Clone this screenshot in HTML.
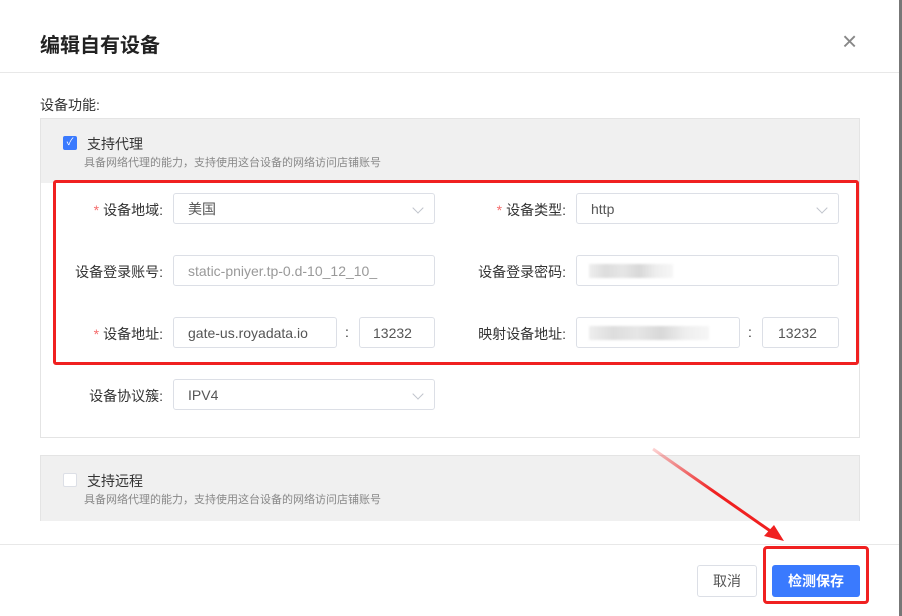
<!DOCTYPE html>
<html><head><meta charset="utf-8"><style>
*{box-sizing:border-box;margin:0;padding:0}
body{width:902px;height:616px;background:#fff;font-family:"Liberation Sans","Noto Sans CJK SC",sans-serif;position:relative;overflow:hidden;color:#333}
.a{position:absolute}
.title{left:40px;top:29px;font-size:20px;font-weight:bold;color:#222}
.lbl{font-size:14px;color:#333;text-align:right;width:140px}
.in{position:absolute;height:31px;border:1px solid #dcdfe6;border-radius:3px;background:#fff;font-size:14px;color:#555;padding-left:14px;line-height:30px}
.chev{position:absolute;right:12px;top:10px;width:8px;height:8px;border-right:1px solid #c0c4cc;border-bottom:1px solid #c0c4cc;transform:rotate(45deg)}
.blur{position:absolute;top:8px;height:14px;background:linear-gradient(90deg,#eee,#ddd,#e6e6e6,#d8d8d8,#eee,#f6f6f6);filter:blur(1px)}
.req{color:#f56c6c;margin-right:4px}
</style></head><body>
<div class="a title">编辑自有设备</div>
<div class="a" style="left:842px;top:28px;font-size:26px;color:#888;line-height:26px">×</div>
<div class="a" style="left:0;top:72px;width:899px;height:1px;background:#e8e8e8"></div>
<div class="a" style="left:899px;top:0;width:3px;height:616px;background:#777"></div>
<div class="a" style="left:40px;top:95px;font-size:14px">设备功能:</div>

<div class="a" style="left:40px;top:118px;width:820px;height:320px;border:1px solid #e4e4e4;background:#fff"></div>
<div class="a" style="left:41px;top:119px;width:818px;height:64px;background:#f0f0f0"></div>
<div class="a" style="left:63px;top:136px;width:14px;height:14px;background:#3a7afe;border-radius:2px;color:#fff;font-size:10px;line-height:14px;text-align:center">✓</div>
<div class="a" style="left:87px;top:134px;font-size:14px;color:#333">支持代理</div>
<div class="a" style="left:84px;top:154px;font-size:11px;color:#888">具备网络代理的能力，支持使用这台设备的网络访问店铺账号</div>

<div class="a" style="left:53px;top:180px;width:806px;height:185px;border:3px solid #f02020;border-radius:3px"></div>

<div class="a lbl" style="left:23px;top:200px"><span class="req">*</span>设备地域:</div>
<div class="in" style="left:173px;top:193px;width:262px">美国<span class="chev"></span></div>
<div class="a lbl" style="left:426px;top:200px"><span class="req">*</span>设备类型:</div>
<div class="in" style="left:576px;top:193px;width:263px">http<span class="chev"></span></div>

<div class="a lbl" style="left:23px;top:262px">设备登录账号:</div>
<div class="in" style="left:173px;top:255px;width:262px;color:#999">static-pniyer.tp-0.d-10_12_10_</div>
<div class="a lbl" style="left:426px;top:262px">设备登录密码:</div>
<div class="in" style="left:576px;top:255px;width:263px"><span class="blur" style="left:12px;width:84px"></span></div>

<div class="a lbl" style="left:23px;top:324px"><span class="req">*</span>设备地址:</div>
<div class="in" style="left:173px;top:317px;width:164px">gate-us.royadata.io</div>
<div class="a" style="left:345px;top:324px;font-size:14px">:</div>
<div class="in" style="left:359px;top:317px;width:76px;padding-left:13px">13232</div>
<div class="a lbl" style="left:426px;top:324px">映射设备地址:</div>
<div class="in" style="left:576px;top:317px;width:164px"><span class="blur" style="left:12px;width:120px"></span></div>
<div class="a" style="left:748px;top:324px;font-size:14px">:</div>
<div class="in" style="left:762px;top:317px;width:77px;padding-left:15px">13232</div>

<div class="a lbl" style="left:23px;top:386px">设备协议簇:</div>
<div class="in" style="left:173px;top:379px;width:262px">IPV4<span class="chev"></span></div>

<div class="a" style="left:40px;top:455px;width:820px;height:66px;background:#f0f0f0;border:1px solid #e4e4e4;border-bottom:none"></div>
<div class="a" style="left:63px;top:473px;width:14px;height:14px;background:#fff;border:1px solid #dcdfe6;border-radius:2px"></div>
<div class="a" style="left:87px;top:471px;font-size:14px">支持远程</div>
<div class="a" style="left:84px;top:491px;font-size:11px;color:#888">具备网络代理的能力，支持使用这台设备的网络访问店铺账号</div>

<div class="a" style="left:0;top:544px;width:899px;height:1px;background:#e8e8e8"></div>
<div class="a" style="left:697px;top:565px;width:60px;height:32px;border:1px solid #dcdfe6;border-radius:3px;font-size:14px;line-height:30px;text-align:center;color:#555">取消</div>
<div class="a" style="left:772px;top:565px;width:88px;height:32px;background:#3a7afe;border-radius:3px;font-size:14px;line-height:32px;text-align:center;color:#fff;font-weight:bold">检测保存</div>
<div class="a" style="left:763px;top:546px;width:106px;height:58px;border:3px solid #f02020;border-radius:4px"></div>

<svg class="a" style="left:0;top:0" width="902" height="616">
<defs><linearGradient id="g" x1="0" y1="0" x2="1" y2="1"><stop offset="0" stop-color="#f02020" stop-opacity="0.2"/><stop offset="0.5" stop-color="#f02020"/><stop offset="1" stop-color="#f02020"/></linearGradient></defs>
<line x1="653" y1="449" x2="776" y2="535" stroke="url(#g)" stroke-width="3"/>
<polygon points="784,541 764,536 774,525" fill="#f02020"/>
</svg>
</body></html>
